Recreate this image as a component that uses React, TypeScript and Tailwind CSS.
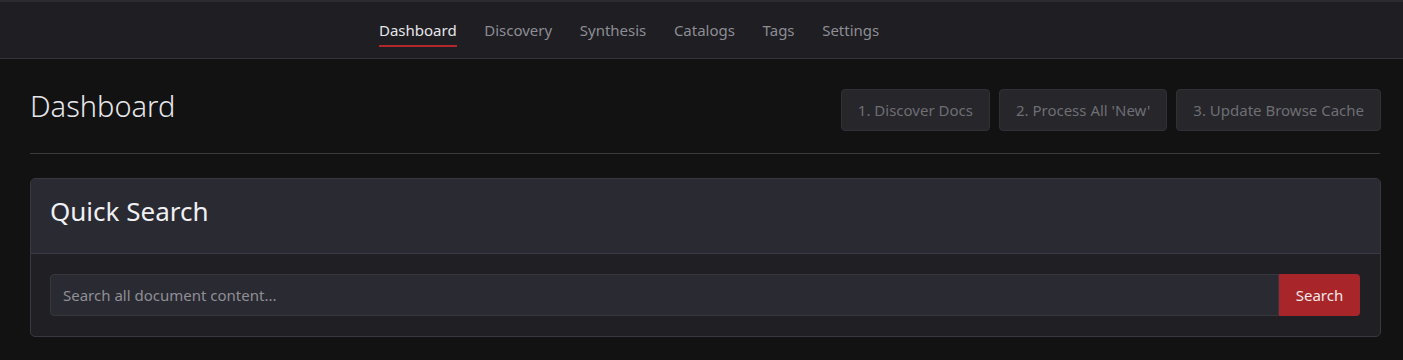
import React from 'react';

const navItems = ['Dashboard', 'Discovery', 'Synthesis', 'Catalogs', 'Tags', 'Settings'];
const actions = ['1. Discover Docs', "2. Process All 'New'", '3. Update Browse Cache'];

const App: React.FC = () => {
  return (
    <div className="min-h-screen bg-[#121212] text-[#e4e4e7] font-['Noto_Sans',sans-serif]">
      <nav className="border-t-2 border-t-[#2c2c31] border-b border-b-[#34343a] bg-[#1e1e23] h-[59px]">
        <div className="flex items-start gap-[27.6px] pl-[379px] pt-[17px]">
          {navItems.map((item, i) => (
            <a
              key={item}
              href="#"
              className={`text-[15px] leading-[22px] pb-[4px] border-b-2 ${
                i === 0 ? 'text-[#e6e6e9] border-[#b0282c]' : 'text-[#8d8d93] border-transparent'
              }`}
            >
              {item}
            </a>
          ))}
        </div>
      </nav>

      <main className="px-[30px] pt-[30px]">
        <div className="flex items-start justify-between">
          <h1 className="text-[29px] font-light leading-tight text-[#e6e6ea] mt-[-1px]">Dashboard</h1>
          <div className="flex gap-[9px] mr-[-8px]">
            {actions.map((a) => (
              <button
                key={a}
                disabled
                className="h-[42px] px-[16px] rounded-[4px] bg-[#26262b] border border-[#303036] text-[15px] text-[#6e6e74]"
              >
                {a}
              </button>
            ))}
          </div>
        </div>

        <hr className="mt-[22px] border-[#3a3a3f] mr-[-7px]" />

        <section className="mt-[24px] mr-[-8px] rounded-[5px] border border-[#38383e] overflow-hidden bg-[#1f1f24]">
          <div className="bg-[#2a2a33] border-b border-[#3a3a42] h-[75px] flex items-center px-[19px]">
            <h2 className="text-[26px] text-[#f0f0f2] pb-[10px]">Quick Search</h2>
          </div>
          <div className="pl-[19px] pr-[20px] pt-[20px] pb-[20px] flex">
            <input
              placeholder="Search all document content..."
              className="flex-1 h-[42px] px-[12px] rounded-l-[4px] bg-[#2a2a32] border border-[#36363d] text-[15px] text-[#e4e4e7] placeholder:text-[#8f8f96] outline-none"
            />
            <button className="h-[42px] w-[81px] rounded-r-[4px] bg-[#a8262a] text-[15px] text-[#f3e9e9]">
              Search
            </button>
          </div>
        </section>
      </main>
    </div>
  );
};

export default App;
